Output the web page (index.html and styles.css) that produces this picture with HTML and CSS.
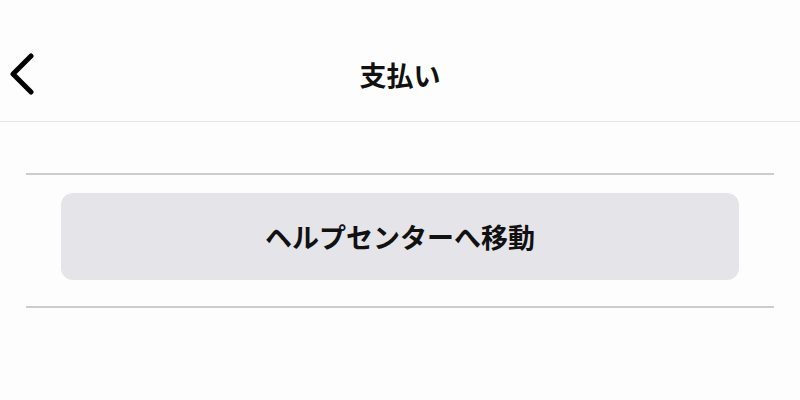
FILE: index.html
```html
<!DOCTYPE html>
<html lang="ja">
<head>
  <meta charset="UTF-8" />
  <meta name="viewport" content="width=device-width, initial-scale=1.0"/>
  <title>支払い</title>
  <link rel="stylesheet" href="styles.css">
</head>
<body>
  <header class="topbar">
    <button class="back" aria-label="戻る">
      <svg width="30" height="44" viewBox="0 0 30 44">
        <path d="M24 5 L6 23 L24 41" fill="none" stroke="#000" stroke-width="5" stroke-linecap="round" stroke-linejoin="round"/>
      </svg>
    </button>
    <h1 class="title">支払い</h1>
  </header>

  <main class="content">
    <hr class="divider" />
    <div class="actions">
      <button class="help-btn">ヘルプセンターへ移動</button>
    </div>
    <hr class="divider" />
  </main>
</body>
</html>
```

FILE: styles.css
```css
body {
  margin: 0;
  background: #fdfdfd;
  font-family: "Noto Sans CJK JP", "Noto Sans", sans-serif;
  color: #111;
}
.topbar {
  position: relative;
  height: 121px;
  border-bottom: 1px solid #e6e6e6;
  display: flex;
  align-items: center;
  justify-content: center;
}
.back {
  position: absolute;
  left: 7px;
  top: 51px;
  padding: 0;
  border: none;
  background: none;
  cursor: pointer;
}
.back svg {
  display: block;
}
.title {
  margin: 0;
  font-size: 27px;
  font-weight: 700;
  line-height: 1;
  padding-top: 28px;
}
.content {
  padding: 51px 26px 0;
}
.divider {
  margin: 0;
  border: none;
  height: 2px;
  background: #cdcdd1;
}
.actions {
  padding: 18px 35px 26px;
}
.help-btn {
  display: block;
  width: 100%;
  height: 87px;
  border: none;
  border-radius: 12px;
  background: #e4e4e9;
  font-family: inherit;
  font-size: 27px;
  font-weight: 700;
  color: #111;
  cursor: pointer;
}
```
